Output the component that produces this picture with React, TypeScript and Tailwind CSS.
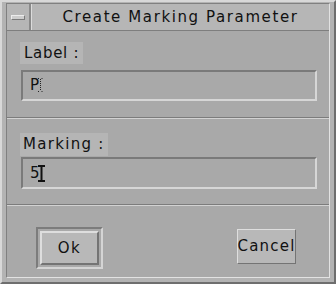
export default function App() {
  const font = { fontFamily: '"DejaVu Sans", "Liberation Sans", sans-serif' };
  return (
    <div
      className="w-[336px] h-[284px] bg-[#b3b3b3] border-2 border-t-[#d8d8d8] border-l-[#d8d8d8] border-r-[#6e6e6e] border-b-[#6e6e6e] pl-[4px] pr-[4px] pt-[1px] pb-[4px] text-[#111111]"
      style={font}
    >
      <div className="w-full h-full flex flex-col border border-t-[#808080] border-l-[#808080] border-r-[#e2e2e2] border-b-[#e2e2e2] bg-[#a9a9a9]">
        {/* Title bar */}
        <div className="h-[27px] flex bg-[#b6b6b6] border-b border-b-[#7e7e7e]">
          <div className="w-[24px] h-full flex items-center justify-center border-r-2 border-r-[#8a8a8a] pt-[1px]">
            <div className="w-[14px] h-[5px] bg-[#cdcdcd] border border-t-[#ececec] border-l-[#ececec] border-r-[#7a7a7a] border-b-[#7a7a7a]" />
          </div>
          <div className="flex-1 flex items-center justify-center text-[15px] tracking-[1.6px] border-l border-l-[#dcdcdc] pt-[1px]">
            Create Marking Parameter
          </div>
        </div>

        {/* Section 1 */}
        <div className="h-[86px] pl-[13px] pt-[11px] flex flex-col">
          <div className="self-start h-[22px] px-[4px] flex items-center bg-[#b5b5b5] text-[15px] tracking-[0.7px]">
            Label :
          </div>
          <div className="mt-[6px] ml-[1px] w-[296px] h-[31px] flex items-center pl-[7px] border-2 border-t-[#7a7a7a] border-l-[#7a7a7a] border-r-[#d6d6d6] border-b-[#d6d6d6] text-[15px]">
            <span className="leading-none">P</span>
            <svg width="5" height="14" viewBox="0 0 5 14" className="-ml-[1px] -mt-[2px]">
              <path d="M0 0.5H1.5M3.5 0.5H5M2.5 1V13M0 13.5H1.5M3.5 13.5H5" stroke="#222" strokeWidth="1" strokeDasharray="1 1" fill="none" />
            </svg>
          </div>
        </div>
        <div className="h-[2px] border-t border-t-[#7c7c7c] border-b border-b-[#d2d2d2]" />

        {/* Section 2 */}
        <div className="h-[85px] pl-[13px] pt-[14px] flex flex-col">
          <div className="self-start h-[23px] px-[3px] flex items-center bg-[#b5b5b5] text-[15px] tracking-[1.3px]">
            Marking :
          </div>
          <div className="mt-[1px] ml-[1px] w-[296px] h-[32px] flex items-center pl-[7px] border-2 border-t-[#7a7a7a] border-l-[#7a7a7a] border-r-[#d6d6d6] border-b-[#d6d6d6] text-[15px]">
            <span className="leading-none">5</span>
            <svg width="7" height="17" viewBox="0 0 7 17" className="-ml-[2px]">
              <path d="M0 1H7M3.5 1V16M0 16H7" stroke="#111" strokeWidth="2" fill="none" />
            </svg>
          </div>
        </div>
        <div className="h-[2px] border-t border-t-[#7c7c7c] border-b border-b-[#d2d2d2]" />

        {/* Buttons */}
        <div className="flex-1 flex justify-between items-start pl-[29px] pr-[33px] pt-[21px]">
          <div className="p-[2px] border-2 border-t-[#7c7c7c] border-l-[#7c7c7c] border-r-[#d4d4d4] border-b-[#d4d4d4]">
            <div className="w-[59px] h-[34px] flex items-center justify-center bg-[#b8b8b8] border-2 border-t-[#dedede] border-l-[#dedede] border-r-[#747474] border-b-[#747474] text-[15px] tracking-[1.5px]">
              Ok
            </div>
          </div>
          <div className="mt-[2px] w-[59px] h-[35px] flex items-center justify-center bg-[#b8b8b8] border border-t-[#dedede] border-l-[#dedede] border-r-[#747474] border-b-[#747474] text-[15px] tracking-[1.2px]">
            Cancel
          </div>
        </div>
      </div>
    </div>
  );
}
